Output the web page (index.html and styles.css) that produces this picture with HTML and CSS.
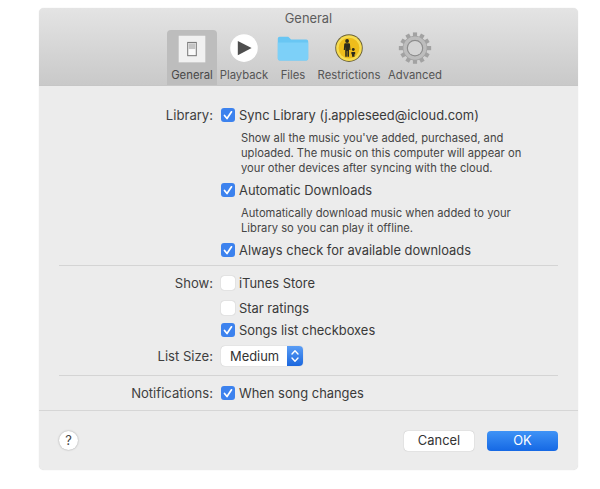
FILE: index.html
```
<!DOCTYPE html>
<html lang="en">
<head>
<meta charset="utf-8">
<title>General</title>
<link rel="stylesheet" href="styles.css">
</head>
<body>
<main class="window">
  <header class="toolbar">
    <div class="title">General</div>
    <nav class="tabs">
      <div class="tab tab-general active">
        <svg class="icon" viewBox="0 0 44 40" width="44" height="40">
          <rect x="8" y="5" width="28" height="28" fill="#f1f1f1"/>
          <rect x="17.500" y="12" width="9" height="14" fill="#fafafa" stroke="#6d6d6d" stroke-width="1"/>
          <rect x="18.500" y="13" width="7" height="6" fill="#c4c4c4"/>
        </svg>
        <span>General</span>
      </div>
      <div class="tab tab-playback">
        <svg class="icon" viewBox="0 0 44 40" width="44" height="40">
          <circle cx="22" cy="18" r="14.500" fill="#fff"/>
          <path d="M15.500 10.500 L15.500 25.500 L30 18 Z" fill="#4e4e4e"/>
        </svg>
        <span>Playback</span>
      </div>
      <div class="tab tab-files">
        <svg class="icon" viewBox="0 0 44 40" width="44" height="40">
          <path d="M6 8 Q6 6 8 6 L17 6 L20 9 L36 9 Q38 9 38 11 L38 29 Q38 31 36 31 L8 31 Q6 31 6 29 Z" fill="#69c6f3"/>
          <path d="M6 12 L38 12 L38 29 Q38 31 36 31 L8 31 Q6 31 6 29 Z" fill="#7dd0f8"/>
        </svg>
        <span>Files</span>
      </div>
      <div class="tab tab-restrictions">
        <svg class="icon" viewBox="0 0 44 40" width="44" height="40">
          <circle cx="22" cy="18" r="14.500" fill="#6b6238"/>
          <circle cx="22" cy="18" r="13.500" fill="#f7dc50"/>
          <circle cx="22" cy="18" r="11" fill="#eebd1c"/>
          <circle cx="20" cy="10.500" r="2" fill="#2c2a1c"/>
          <path d="M16.500 20 L17 13.500 Q17.200 13 18 13 L22 13 Q22.800 13 23 13.500 L23.500 20 L22.300 20 L22 16.500 L22 27 L20.300 27 L20.300 21 L19.700 21 L19.700 27 L18 27 L18 16.500 L17.700 20 Z" fill="#2c2a1c"/>
          <circle cx="26.500" cy="19.500" r="1.500" fill="#2c2a1c"/>
          <path d="M24.500 22 L28.500 22 L28.500 24.500 L27.800 24.500 L27.800 27 L25.200 27 L25.200 24.500 L24.500 24.500 Z" fill="#2c2a1c"/>
        </svg>
        <span>Restrictions</span>
      </div>
      <div class="tab tab-advanced">
        <svg class="icon" viewBox="0 0 44 40" width="44" height="40">
          <g fill="#a2a2a2">
            <circle cx="22" cy="18" r="13"/>
            <rect x="19.800" y="1.500" width="4.400" height="6"/>
            <rect x="19.800" y="28.500" width="4.400" height="6"/>
            <rect x="5" y="15.800" width="6" height="4.400"/>
            <rect x="33" y="15.800" width="6" height="4.400"/>
            <rect x="19.800" y="1.500" width="4.400" height="6" transform="rotate(30 22 18)"/>
            <rect x="19.800" y="1.500" width="4.400" height="6" transform="rotate(60 22 18)"/>
            <rect x="19.800" y="1.500" width="4.400" height="6" transform="rotate(120 22 18)"/>
            <rect x="19.800" y="1.500" width="4.400" height="6" transform="rotate(150 22 18)"/>
            <rect x="19.800" y="1.500" width="4.400" height="6" transform="rotate(210 22 18)"/>
            <rect x="19.800" y="1.500" width="4.400" height="6" transform="rotate(240 22 18)"/>
            <rect x="19.800" y="1.500" width="4.400" height="6" transform="rotate(300 22 18)"/>
            <rect x="19.800" y="1.500" width="4.400" height="6" transform="rotate(330 22 18)"/>
          </g>
          <circle cx="22" cy="18" r="10.500" fill="none" stroke="#bdbdbd" stroke-width="3.500"/>
          <circle cx="22" cy="18" r="8.500" fill="#8a8a8a"/>
          <circle cx="22" cy="18" r="7.500" fill="#d4d4d4"/>
        </svg>
        <span>Advanced</span>
      </div>
    </nav>
  </header>

  <section class="content">
    <div class="group group-library">
      <div class="row">
        <div class="label">Library:</div>
        <label class="check on"><span class="box"><svg viewBox="0 0 14 14" width="14" height="14"><path d="M3.500 7.500 L6 10.500 L10.500 3.800" fill="none" stroke="#fff" stroke-width="1.700" stroke-linecap="round" stroke-linejoin="round"/></svg></span>Sync Library (j.appleseed@icloud.com)</label>
      </div>
      <p class="desc d1">Show all the music you've added, purchased, and<br>uploaded. The music on this computer will appear on<br>your other devices after syncing with the cloud.</p>
      <div class="row r-auto">
        <div class="label"></div>
        <label class="check on"><span class="box"><svg viewBox="0 0 14 14" width="14" height="14"><path d="M3.500 7.500 L6 10.500 L10.500 3.800" fill="none" stroke="#fff" stroke-width="1.700" stroke-linecap="round" stroke-linejoin="round"/></svg></span>Automatic Downloads</label>
      </div>
      <p class="desc d2">Automatically download music when added to your<br>Library so you can play it offline.</p>
      <div class="row r-always">
        <div class="label"></div>
        <label class="check on"><span class="box"><svg viewBox="0 0 14 14" width="14" height="14"><path d="M3.500 7.500 L6 10.500 L10.500 3.800" fill="none" stroke="#fff" stroke-width="1.700" stroke-linecap="round" stroke-linejoin="round"/></svg></span>Always check for available downloads</label>
      </div>
    </div>
    <hr class="rule rule-a">
    <div class="group group-show">
      <div class="row">
        <div class="label">Show:</div>
        <label class="check"><span class="box"></span>iTunes Store</label>
      </div>
      <div class="row r-star">
        <div class="label"></div>
        <label class="check"><span class="box"></span>Star ratings</label>
      </div>
      <div class="row r-songs">
        <div class="label"></div>
        <label class="check on"><span class="box"><svg viewBox="0 0 14 14" width="14" height="14"><path d="M3.500 7.500 L6 10.500 L10.500 3.800" fill="none" stroke="#fff" stroke-width="1.700" stroke-linecap="round" stroke-linejoin="round"/></svg></span>Songs list checkboxes</label>
      </div>
      <div class="row r-size">
        <div class="label">List Size:</div>
        <div class="select">
          <span class="select-value">Medium</span>
          <span class="stepper"><svg viewBox="0 0 16 20" width="16" height="20"><path d="M5 8 L8 4.800 L11 8 M5 12 L8 15.200 L11 12" fill="none" stroke="#fff" stroke-width="1.400" stroke-linecap="round" stroke-linejoin="round"/></svg></span>
        </div>
      </div>
    </div>
    <hr class="rule rule-b">
    <div class="row r-notify">
      <div class="label">Notifications:</div>
      <label class="check on"><span class="box"><svg viewBox="0 0 14 14" width="14" height="14"><path d="M3.500 7.500 L6 10.500 L10.500 3.800" fill="none" stroke="#fff" stroke-width="1.700" stroke-linecap="round" stroke-linejoin="round"/></svg></span>When song changes</label>
    </div>
  </section>

  <footer class="footer">
    <div class="help">?</div>
    <div class="actions">
      <div class="btn">Cancel</div>
      <div class="btn primary">OK</div>
    </div>
  </footer>
</main>
</body>
</html>
```

FILE: styles.css
```
* { box-sizing: border-box; }
html, body { margin: 0; padding: 0; }
body {
  width: 600px;
  height: 489px;
  background: #fff;
  padding: 8px 22px 0 39px;
  font-family: Inter, "Liberation Sans", sans-serif;
  font-size: 12.900px;
  color: #3a3a3a;
  overflow: hidden;
}
.window {
  width: 539px;
  height: 462px;
  background: #ececec;
  border-radius: 5px;
  overflow: hidden;
  display: flex;
  flex-direction: column;
  box-shadow: 0 0 1px rgba(0,0,0,.18);
}
.toolbar {
  height: 78px;
  background: linear-gradient(#e4e4e4, #c9c9c9);
  border-bottom: 1px solid #c6c6c6;
  flex: none;
}
.title {
  height: 22px;
  padding-top: 4px;
  text-align: center;
  font-size: 12.900px;
  line-height: 14px;
  color: #5d5d5d;
}
.tabs {
  display: flex;
  margin-left: 128px;
}
.tab {
  height: 55px;
  border-radius: 4px 4px 0 0;
  display: flex;
  flex-direction: column;
  align-items: center;
  font-size: 11.300px;
  line-height: 14px;
  color: #555;
}
.tab .icon { display: block; flex: none; height: 38px; margin: 1px 0 -1px; }
.tab span { white-space: nowrap; }
.tab-general { width: 50px; background: #bdbdbd; color: #484848; }
.tab-playback { width: 54px; }
.tab-files { width: 44px; }
.tab-restrictions { width: 68px; }
.tab-advanced { width: 64px; }

.content { flex: none; height: 325px; padding-top: 19px; border-bottom: 1px solid #d6d6d6; }
.row { display: flex; align-items: center; height: 20px; }
.label {
  width: 174px;
  flex: none;
  text-align: right;
  font-size: 13.100px;
  color: #3f3f3f;
}
.check {
  display: flex;
  align-items: center;
  margin-left: 8px;
  font-size: 12.900px;
  white-space: nowrap;
  color: #3a3a3a;
}
.box {
  width: 14px;
  height: 14px;
  flex: none;
  margin-right: 4px;
  border-radius: 3px;
  background: #fff;
  box-shadow: 0 0 1px rgba(0,0,0,.35);
  display: flex;
}
.check.on .box { background: #3c82ee; box-shadow: none; }
.desc {
  margin: 0 0 0 202px;
  font-size: 11.200px;
  line-height: 15px;
  color: #454545;
}
.d1 { margin-top: 6px; }
.r-auto { margin-top: 4px; }
.d2 { margin-top: 6px; }
.r-always { margin-top: 4px; }
.rule {
  height: 1px;
  border: 0;
  margin: 0 20px;
  background: #d4d4d4;
}
.rule-a { margin-top: 5px; }
.group-show { margin-top: 7px; }
.r-star { margin-top: 5px; }
.r-songs { margin-top: 2px; }
.r-size { margin-top: 6px; }
.rule-b { margin-top: 9px; }
.r-notify { margin-top: 7px; }
.select {
  margin-left: 8px;
  width: 82px;
  height: 20px;
  border-radius: 4px;
  background: #fff;
  box-shadow: 0 0 1px rgba(0,0,0,.3);
  display: flex;
  justify-content: space-between;
  align-items: center;
  overflow: hidden;
}
.select-value { padding-left: 9px; color: #333; }
.stepper {
  width: 16px;
  height: 20px;
  background: linear-gradient(#5a9df5, #1b67de);
  display: block;
}
.stepper svg { display: block; }
.footer {
  flex: 1;
  display: flex;
  justify-content: space-between;
  align-items: center;
  padding: 0 20px;
}
.help {
  width: 19px;
  height: 19px;
  border-radius: 50%;
  background: #fff;
  box-shadow: 0 0 2px rgba(0,0,0,.35);
  text-align: center;
  line-height: 19px;
  font-size: 12.900px;
  color: #444;
}
.actions { display: flex; gap: 13px; }
.btn {
  width: 70px;
  height: 20px;
  border-radius: 4px;
  background: #fff;
  box-shadow: 0 0 1px rgba(0,0,0,.35);
  text-align: center;
  line-height: 20px;
  font-size: 12.900px;
  color: #333;
}
.btn.primary {
  width: 71px;
  background: linear-gradient(#3f93f6, #1568e4);
  color: #fff;
  box-shadow: none;
}
```
